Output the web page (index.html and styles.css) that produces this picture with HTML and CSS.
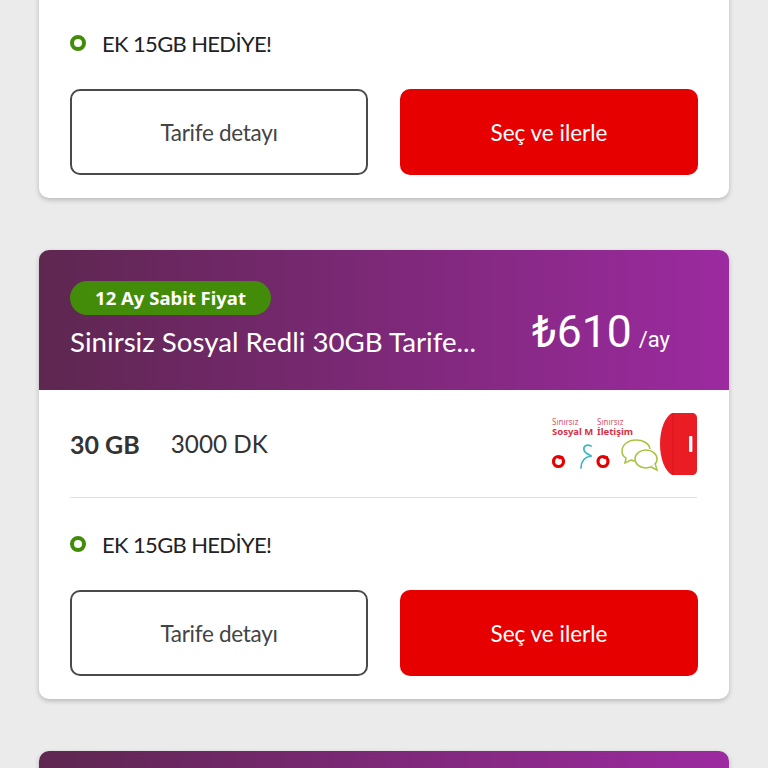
FILE: index.html
```html
<!DOCTYPE html>
<html lang="tr">
<head>
  <meta charset="UTF-8" />
  <meta name="viewport" content="width=device-width, initial-scale=1.0">
  <title>Tarifeler</title>
  <link rel="stylesheet" href="styles.css">
</head>
<body>
  <div class="tariff-list">

    <div class="card">
      <div class="card-head">
        <div class="head-left">
          <span class="badge">12 Ay Sabit Fiyat</span>
          <div class="plan-name">Sinirsiz Sosyal Redli 30GB Tarife...</div>
        </div>
        <div class="price"><span class="amount">₺610</span><span class="per">/ay</span></div>
      </div>
      <div class="specs">
        <span class="gb">30 GB</span>
        <span class="mins">3000 DK</span>
        <svg class="perks" viewBox="0 0 146 64" role="img">
          <use href="#perks-art"></use>
        </svg>
      </div>
      <div class="gift"><span class="dot"></span>EK 15GB HEDİYE!</div>
      <div class="actions">
        <button class="btn btn-outline">Tarife detayı</button>
        <button class="btn btn-red">Seç ve ilerle</button>
      </div>
    </div>

    <div class="card">
      <div class="card-head">
        <div class="head-left">
          <span class="badge">12 Ay Sabit Fiyat</span>
          <div class="plan-name">Sinirsiz Sosyal Redli 30GB Tarife...</div>
        </div>
        <div class="price"><span class="amount">₺610</span><span class="per">/ay</span></div>
      </div>
      <div class="specs">
        <span class="gb">30 GB</span>
        <span class="mins">3000 DK</span>
        <svg class="perks" viewBox="0 0 146 64" role="img">
          <defs>
            <g id="perks-art">
              <text x="1" y="13" class="perk-thin">Sınırsız</text>
              <text x="1" y="23" class="perk-bold">Sosyal M</text>
              <text x="46" y="13" class="perk-thin">Sınırsız</text>
              <text x="46" y="23" class="perk-bold">İletişim</text>
              <circle cx="7.5" cy="49.5" r="5" fill="none" stroke="#e60000" stroke-width="3.2"/>
              <path d="M7 47c1-2 3-3 5-3l-1 3z" fill="#e60000"/>
              <path d="M40 34c-4-2-8 0-7 4 .5 3 4 4 7 6" fill="none" stroke="#3fb6c4" stroke-width="1.7" stroke-linecap="round"/>
              <path d="M40 44c-6 1-10 5-10 12" fill="none" stroke="#3fb6c4" stroke-width="1.7" stroke-linecap="round"/>
              <circle cx="52" cy="49.5" r="5" fill="none" stroke="#e60000" stroke-width="3.2"/>
              <path d="M52 47c1-2 3-3 5-3l-1 3z" fill="#e60000"/>
              <path d="M85 28c-8 0-14 5-14 11 0 3 2 6 4 7l-1 5 6-3c2 1 4 1 5 0" fill="none" stroke="#a9c23f" stroke-width="1.5"/>
              <path d="M85 28c7 0 13 3 14 9" fill="none" stroke="#a9c23f" stroke-width="1.5"/>
              <ellipse cx="95" cy="47" rx="11" ry="9" fill="#fff" stroke="#a9c23f" stroke-width="1.5"/>
              <path d="M100 55l6 3-2-7" fill="#fff" stroke="#a9c23f" stroke-width="1.5"/>
              <path d="M121 1h20c3 0 5 2 5 5v52c0 3-2 5-5 5h-20c-7-4-12-16-12-31s5-27 12-31z" fill="#ea1c24"/>
              <path d="M122 1v62" stroke="#c9151c" stroke-width="0.7"/>
              <rect x="138" y="24" width="3.4" height="16" rx="1" fill="#fff"/>
            </g>
          </defs>
          <use href="#perks-art"></use>
        </svg>
      </div>
      <div class="gift"><span class="dot"></span>EK 15GB HEDİYE!</div>
      <div class="actions">
        <button class="btn btn-outline">Tarife detayı</button>
        <button class="btn btn-red">Seç ve ilerle</button>
      </div>
    </div>

    <div class="card">
      <div class="card-head">
        <div class="head-left">
          <span class="badge">12 Ay Sabit Fiyat</span>
          <div class="plan-name">Sinirsiz Sosyal Redli 30GB Tarife...</div>
        </div>
        <div class="price"><span class="amount">₺610</span><span class="per">/ay</span></div>
      </div>
    </div>

  </div>
</body>
</html>
```

FILE: styles.css
```css
html, body {
  height: 768px;
  overflow: hidden;
}
body {
  margin: 0;
  background: #ebebeb;
  font-family: Lato, "Noto Sans", sans-serif;
  color: #333;
}
.tariff-list {
  display: flex;
  flex-direction: column;
  gap: 52px;
  margin-top: -251px;
  padding: 0 39px;
}
.card {
  background: #fff;
  border-radius: 10px;
  overflow: hidden;
  box-shadow: 0 2px 5px rgba(0, 0, 0, 0.22);
  flex-shrink: 0;
}
.card-head {
  height: 140px;
  box-sizing: border-box;
  padding: 31px 31px 0;
  display: flex;
  justify-content: space-between;
  color: #fff;
  background: linear-gradient(to right, #5e2750, #9c2aa0);
}
.head-left {
  width: 412px;
}
.badge {
  display: block;
  width: 201px;
  height: 34px;
  line-height: 34px;
  border-radius: 17px;
  background: #428c0a;
  font-family: "Noto Sans", sans-serif;
  font-size: 18.5px;
  font-weight: 700;
  text-align: center;
}
.plan-name {
  margin-top: 7px;
  font-size: 27.7px;
  line-height: 40px;
  white-space: nowrap;
}
.price {
  margin: 24px 28px 0 0;
  font-family: Roboto, sans-serif;
  white-space: nowrap;
}
.amount {
  font-size: 44.5px;
  line-height: 54px;
}
.per {
  margin-left: 7px;
  font-size: 22px;
}
.specs {
  height: 107px;
  margin: 0 32px 0 31px;
  border-bottom: 1px solid #e2e2e2;
  display: flex;
  align-items: center;
  font-size: 25px;
}
.gb {
  font-weight: 700;
  margin-right: 31px;
}
.mins {
  flex: 1;
  font-size: 24.3px;
}
.perks {
  width: 146px;
  height: 64px;
}
.perk-thin {
  font-family: "Noto Sans", sans-serif;
  font-size: 8px;
  fill: #e0566a;
}
.perk-bold {
  font-family: "Noto Sans", sans-serif;
  font-size: 9.5px;
  font-weight: 700;
  fill: #d8303f;
}
.gift {
  height: 92px;
  margin-left: 31px;
  display: flex;
  align-items: center;
  gap: 16px;
  font-size: 22px;
  letter-spacing: -0.65px;
  color: #222;
}
.dot {
  width: 16px;
  height: 16px;
  box-sizing: border-box;
  border: 4px solid #428c0a;
  border-radius: 50%;
}
.actions {
  display: grid;
  grid-template-columns: 298px 298px;
  gap: 32px;
  padding: 0 0 23px 31px;
}
.btn {
  height: 86px;
  border-radius: 10px;
  font-family: Lato, sans-serif;
  font-size: 22.5px;
  letter-spacing: -0.3px;
}
.btn-outline {
  background: #fff;
  border: 2px solid #4a4a4a;
  color: #444;
}
.btn-red {
  background: #e60000;
  border: none;
  color: #fff;
  letter-spacing: 0;
}
```
